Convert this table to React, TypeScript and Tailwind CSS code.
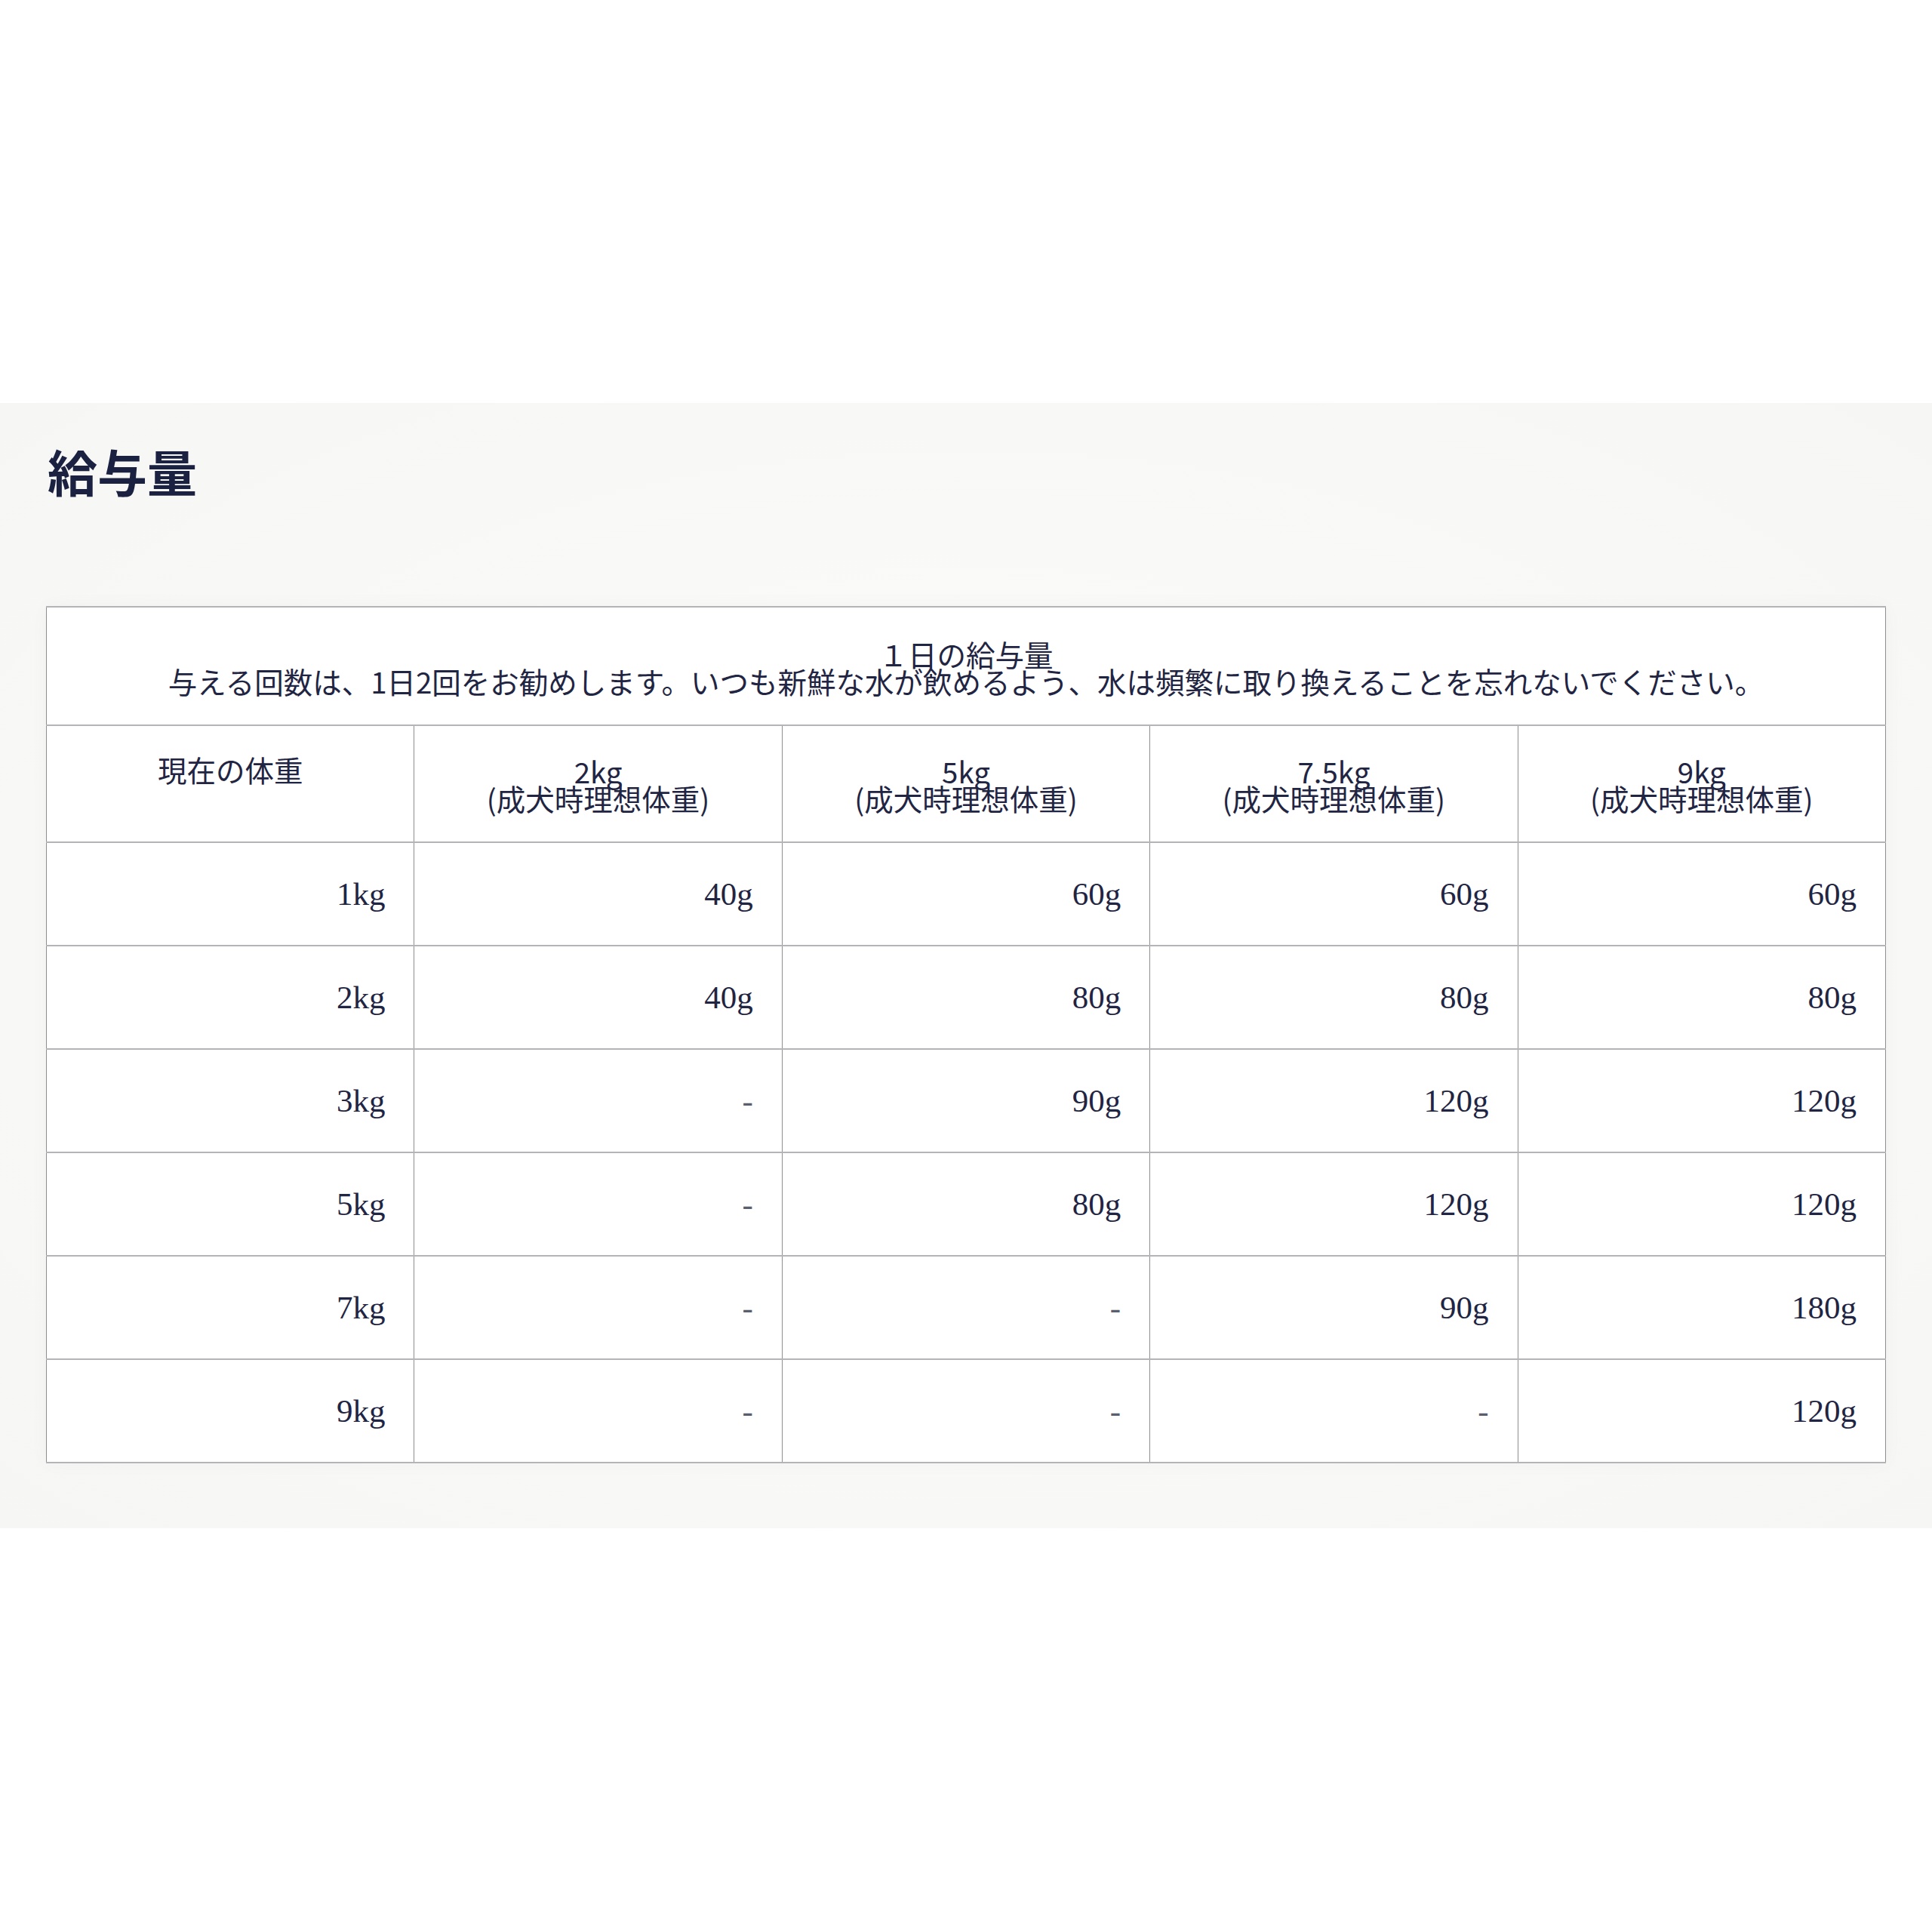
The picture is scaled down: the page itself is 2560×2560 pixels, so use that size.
import React from "react";

const cols = ["2kg", "5kg", "7.5kg", "9kg"];
const rows: [string, string[]][] = [
  ["1kg", ["40g", "60g", "60g", "60g"]],
  ["2kg", ["40g", "80g", "80g", "80g"]],
  ["3kg", ["-", "90g", "120g", "120g"]],
  ["5kg", ["-", "80g", "120g", "120g"]],
  ["7kg", ["-", "-", "90g", "180g"]],
  ["9kg", ["-", "-", "-", "120g"]],
];

const jp = "font-['Noto_Sans_CJK_JP','Noto_Sans',sans-serif]";
const serif = "font-['Liberation_Serif','Noto_Sans_CJK_JP',serif]";
const cell =
  "border-x border-x-[#8e8e8e] border-y-2 border-y-[#b4b4b8] p-0";

export default function App() {
  return (
    <div className="min-h-[2560px] bg-white pt-[534px]">
      <section className="bg-[#f7f7f5] bg-[radial-gradient(ellipse_at_center,#fdfdfc_0%,#f9f9f8_55%,#f6f6f4_100%)] px-[61px] pt-[56px] pb-[86px]">
        <h2
          className={`${jp} ml-[2px] text-[66px] leading-none font-bold text-[#1b2140] mb-[147px]`}
        >
          給与量
        </h2>
        <table className="w-full table-fixed border-collapse bg-white text-[#1f2542] shadow-[0_0_24px_rgba(0,0,0,0.03)]">
          <tbody>
            <tr>
              <td
                colSpan={5}
                className={`${cell} ${jp} text-center text-[38.5px] leading-[36px] pt-[43px] pb-[40px]`}
              >
                <div>１日の給与量</div>
                <div>
                  与える回数は、1日2回をお勧めします。いつも新鮮な水が飲めるよう、水は頻繁に取り換えることを忘れないでください。
                </div>
              </td>
            </tr>
            <tr>
              <td
                className={`${cell} ${jp} text-center align-top text-[38.5px] leading-[36px] pt-[39px] pb-[42px]`}
              >
                現在の体重
              </td>
              {cols.map((c) => (
                <td
                  key={c}
                  className={`${cell} ${jp} text-center align-top text-[38.5px] leading-[36px] pt-[41px] pb-[40px]`}
                >
                  <div>{c}</div>
                  <div>(成犬時理想体重)</div>
                </td>
              ))}
            </tr>
            {rows.map(([w, vals]) => (
              <tr key={w}>
                <td
                  className={`${cell} ${serif} h-[137px] text-right align-middle text-[43px] leading-none pr-[38px]`}
                >
                  {w}
                </td>
                {vals.map((v, i) => (
                  <td
                    key={i}
                    className={`${cell} ${serif} h-[137px] text-right align-middle text-[43px] leading-none pr-[38px] ${
                      v === "-" ? "text-[#5a5f70]" : ""
                    }`}
                  >
                    {v}
                  </td>
                ))}
              </tr>
            ))}
          </tbody>
        </table>
      </section>
    </div>
  );
}
